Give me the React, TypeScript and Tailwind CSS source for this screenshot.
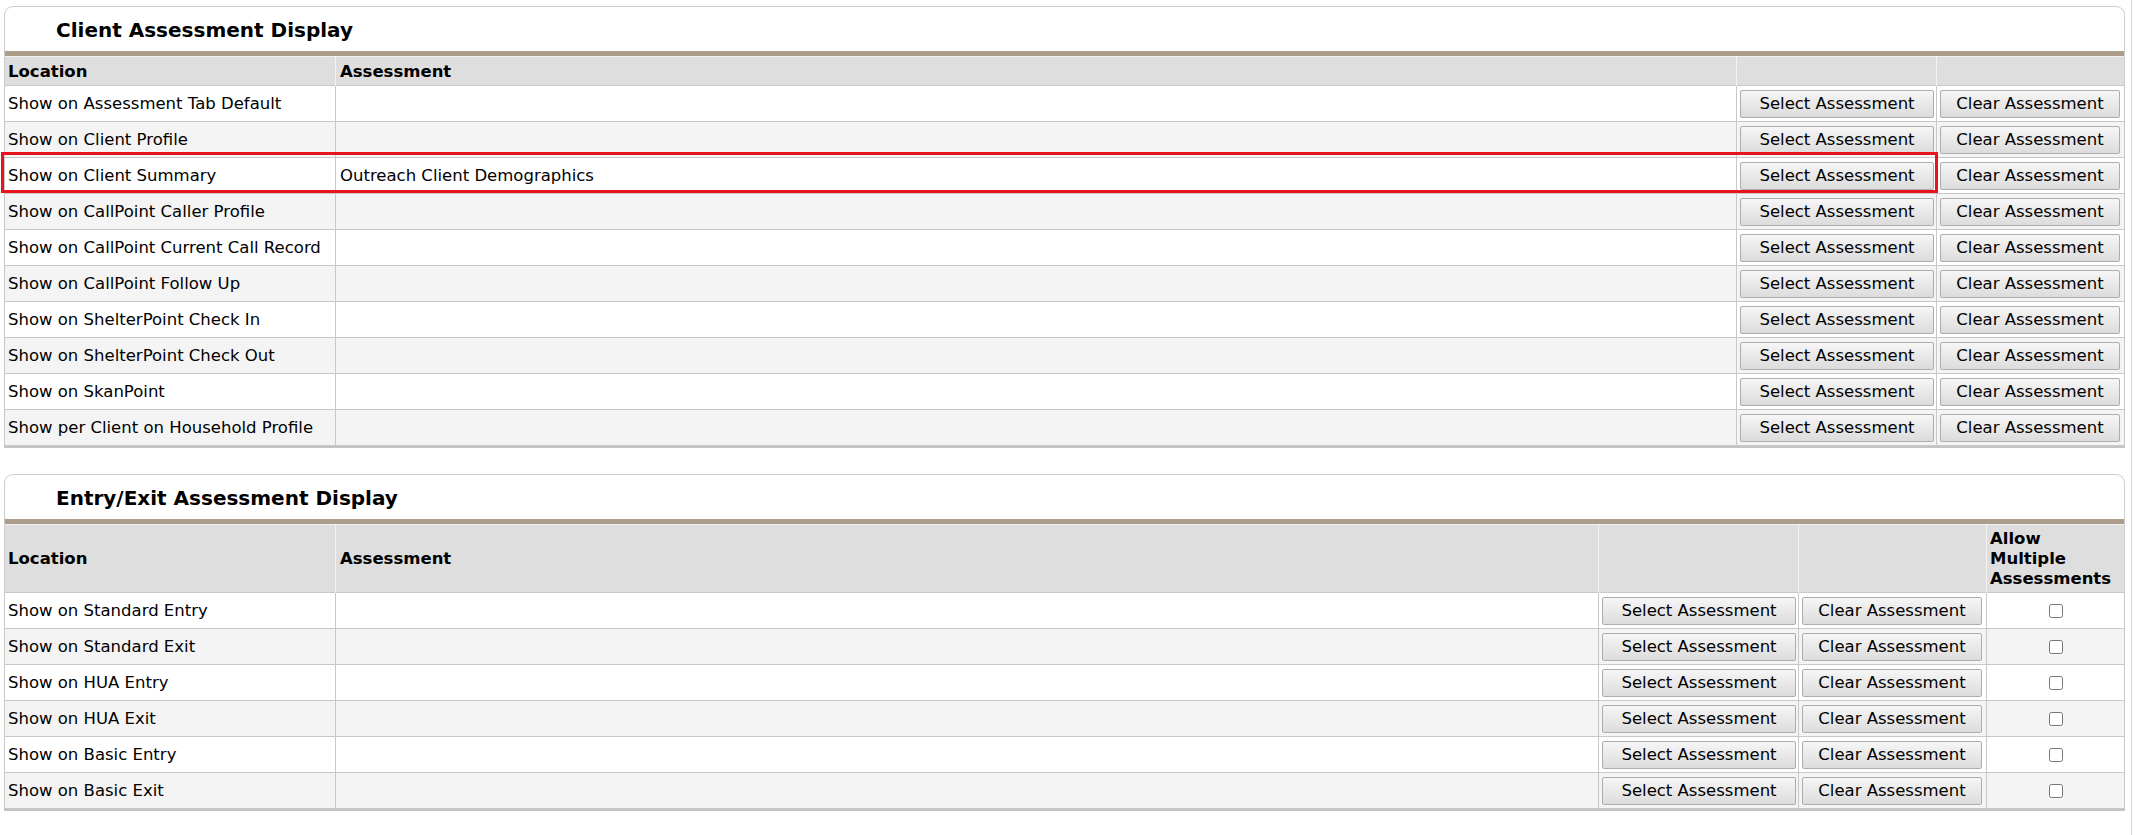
import React from "react";

const clientRows = [
  { location: "Show on Assessment Tab Default", assessment: "" },
  { location: "Show on Client Profile", assessment: "" },
  { location: "Show on Client Summary", assessment: "Outreach Client Demographics" },
  { location: "Show on CallPoint Caller Profile", assessment: "" },
  { location: "Show on CallPoint Current Call Record", assessment: "" },
  { location: "Show on CallPoint Follow Up", assessment: "" },
  { location: "Show on ShelterPoint Check In", assessment: "" },
  { location: "Show on ShelterPoint Check Out", assessment: "" },
  { location: "Show on SkanPoint", assessment: "" },
  { location: "Show per Client on Household Profile", assessment: "" },
];

const entryRows = [
  "Show on Standard Entry",
  "Show on Standard Exit",
  "Show on HUA Entry",
  "Show on HUA Exit",
  "Show on Basic Entry",
  "Show on Basic Exit",
];

function Btn({ label, w }: { label: string; w: string }) {
  return (
    <button
      type="button"
      className={`${w} h-[28px] border border-[#adadad] rounded-[2px] bg-gradient-to-b from-[#f6f6f6] to-[#dcdcdc] text-[16.5px] leading-none text-black pt-[1px]`}
    >
      {label}
    </button>
  );
}

function Card({ title, children }: { title: string; children: React.ReactNode }) {
  return (
    <div className="w-[2121px] border border-b-0 border-[#cccccc] rounded-t-[9px] bg-white">
      <div className="h-[44px] flex items-center pl-[51px] pt-[1px] text-[20px] font-bold text-black">
        {title}
      </div>
      <div className="h-[5px] bg-[#ac9d8b]" />
      {children}
    </div>
  );
}

export default function App() {
  return (
    <main
      className="relative min-h-screen w-[2132px] border-r border-[#d4d4d4] bg-white pt-[6px] pl-[4px] text-[16.5px] text-black"
      style={{ fontFamily: '"DejaVu Sans", Verdana, sans-serif' }}
    >
      <Card title="Client Assessment Display">
        <table className="table-fixed border-collapse w-[2120px] -ml-px">
          <colgroup>
            <col className="w-[331px]" />
            <col className="w-[1401px]" />
            <col className="w-[200px]" />
            <col className="w-[188px]" />
          </colgroup>
          <thead>
            <tr className="h-[29px] bg-[#dedede] border-t border-[#f2f2f2]">
              <th className="text-left font-bold px-[3px] pt-[2px] border-l border-[#cccccc] border-r border-r-[#f4f4f4]">Location</th>
              <th className="text-left font-bold px-[4px] pt-[2px] border-r border-[#f4f4f4]">Assessment</th>
              <th className="border-r border-[#f4f4f4]"></th>
              <th className="border-r border-[#cccccc]"></th>
            </tr>
          </thead>
          <tbody>
            {clientRows.map((r, i) => (
              <tr
                key={r.location}
                className={`h-[36px] ${i % 2 === 0 ? "bg-white" : "bg-[#f4f4f4]"} border-t border-[#c8c8c8]`}
              >
                <td className="px-[3px] pt-[2px] border border-[#c8c8c8] whitespace-nowrap overflow-hidden">{r.location}</td>
                <td className="px-[4px] pt-[2px] border border-[#c8c8c8]">{r.assessment}</td>
                <td className="px-[3px] pt-[1px] border border-[#c8c8c8]">
                  <Btn label="Select Assessment" w="w-[194px]" />
                </td>
                <td className="px-[3px] pt-[1px] border border-[#c8c8c8]">
                  <Btn label="Clear Assessment" w="w-[180px]" />
                </td>
              </tr>
            ))}
          </tbody>
        </table>
        <div className="h-[2px] bg-[#c4c4c4] -ml-px w-[2121px]" />
      </Card>

      <div className="h-[26px]" />

      <Card title="Entry/Exit Assessment Display">
        <table className="table-fixed border-collapse w-[2120px] -ml-px">
          <colgroup>
            <col className="w-[331px]" />
            <col className="w-[1263px]" />
            <col className="w-[200px]" />
            <col className="w-[188px]" />
            <col className="w-[138px]" />
          </colgroup>
          <thead>
            <tr className="h-[68px] bg-[#dedede] border-t border-[#f2f2f2]">
              <th className="text-left font-bold px-[3px] pt-[2px] border-l border-[#cccccc] border-r border-r-[#f4f4f4]">Location</th>
              <th className="text-left font-bold px-[4px] pt-[2px] border-r border-[#f4f4f4]">Assessment</th>
              <th className="border-r border-[#f4f4f4]"></th>
              <th className="border-r border-[#f4f4f4]"></th>
              <th className="text-left font-bold px-[3px] align-top pt-[4px] leading-[20px] border-r border-[#cccccc]">
                Allow Multiple Assessments
              </th>
            </tr>
          </thead>
          <tbody>
            {entryRows.map((loc, i) => (
              <tr
                key={loc}
                className={`h-[36px] ${i % 2 === 0 ? "bg-white" : "bg-[#f4f4f4]"} border-t border-[#c8c8c8]`}
              >
                <td className="px-[3px] pt-[2px] border border-[#c8c8c8] whitespace-nowrap">{loc}</td>
                <td className="px-[4px] border border-[#c8c8c8]"></td>
                <td className="px-[3px] pt-[1px] border border-[#c8c8c8]">
                  <Btn label="Select Assessment" w="w-[194px]" />
                </td>
                <td className="px-[3px] pt-[1px] border border-[#c8c8c8]">
                  <Btn label="Clear Assessment" w="w-[180px]" />
                </td>
                <td className="border border-[#c8c8c8] text-center">
                  <input type="checkbox" className="w-[14px] h-[14px] align-middle" />
                </td>
              </tr>
            ))}
          </tbody>
        </table>
        <div className="h-[2px] bg-[#c4c4c4] -ml-px w-[2121px]" />
      </Card>

      <div className="absolute left-[1px] top-[152px] w-[1937px] h-[41px] border-[3px] border-[#e8141c] pointer-events-none" />
    </main>
  );
}
